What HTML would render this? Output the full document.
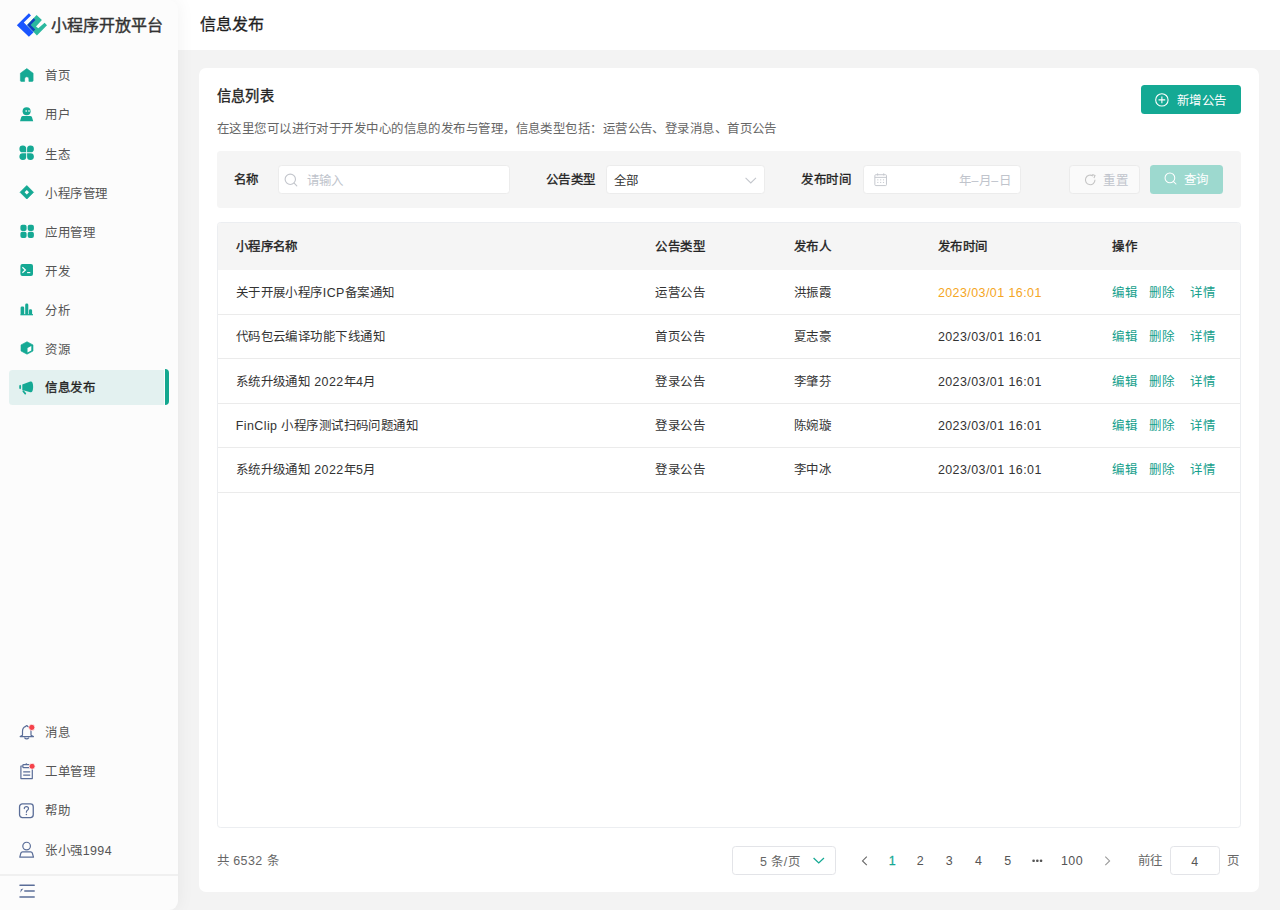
<!DOCTYPE html>
<html lang="zh-CN"><head><meta charset="utf-8">
<style>
html{zoom:0.888889;overflow:hidden;}
*{box-sizing:border-box;margin:0;padding:0;}
body{text-spacing-trim:space-all;width:1440px;height:1023.75px;overflow:hidden;position:relative;background:#f3f3f3;font-family:"Liberation Sans",sans-serif;font-size:14px;letter-spacing:0.5px;color:#333;}
.abs{position:absolute;}
/* sidebar */
#side{position:absolute;left:0;top:0;width:200px;height:1024px;background:#fcfcfc;border-radius:0 10px 10px 0;box-shadow:0 0 20px rgba(0,0,0,0.06);z-index:2;}
#logo{position:absolute;left:13.5px;top:9px;width:45px;height:38.25px;}
#logotxt{position:absolute;left:57px;top:16px;font-size:18px;letter-spacing:0;font-weight:normal;-webkit-text-stroke:0.45px #333;color:#333;line-height:26px;white-space:nowrap;}
.mi{position:absolute;left:10px;width:180px;height:40px;border-radius:4px;}
.mi .ic{position:absolute;left:11.375px;top:11px;width:18px;height:18px;overflow:visible;}
.mi .tx{position:absolute;left:41px;top:2.75px;line-height:40px;font-size:14px;color:#555;white-space:nowrap;}
.mi.act{background:linear-gradient(to right,#e3f1f0 0,#e3f1f0 174.5px,#fcfcfc 174.5px);}
.mi.act .tx{top:1.75px;color:#222;-webkit-text-stroke:0.35px #222;}
.mi.act:after{content:"";position:absolute;right:0;top:-0.5px;width:4.5px;height:40.5px;background:#13a78f;border-radius:0 4.5px 4.5px 0;}
#sep{position:absolute;left:0;top:983px;width:200px;height:2px;background:#f0f0f0;}
/* header */
#hdr{position:absolute;left:190px;top:0;width:1250px;height:56px;background:#fff;}
#hdrt{position:absolute;left:225px;top:15px;font-size:18px;letter-spacing:0;font-weight:normal;-webkit-text-stroke:0.3px #222;color:#222;line-height:28px;z-index:3;}
/* card */
#card{position:absolute;left:224px;top:76px;width:1192px;height:928px;background:#fff;border-radius:8px;}
#ttl{position:absolute;left:20px;top:21px;font-size:16px;letter-spacing:0.25px;font-weight:normal;-webkit-text-stroke:0.4px #222;color:#222;line-height:24px;}
#desc{position:absolute;left:20px;top:58px;font-size:14px;color:#666;line-height:24px;white-space:nowrap;}
#addbtn{position:absolute;left:1060px;top:20px;width:112px;height:32px;background:#14a994;border-radius:4px;color:#fff;font-size:14px;line-height:32px;}
#addbtn span{position:absolute;left:40px;top:2px;}
#filter{position:absolute;left:20px;top:94px;width:1152px;height:64px;background:#f5f5f5;border-radius:4px;}
.lbl{position:absolute;top:1px;margin-left:-1px;line-height:64px;font-size:14px;font-weight:normal;-webkit-text-stroke:0.35px #222;color:#222;white-space:nowrap;}
.inp{position:absolute;top:16px;height:32px;background:#fff;border:1px solid #ececec;border-radius:4px;}
.btn{position:absolute;top:16px;height:32px;border-radius:4px;font-size:14px;line-height:30px;}
.ph{position:absolute;top:2px;line-height:30px;font-size:14px;color:#c0c4cc;white-space:nowrap;}
/* table */
#tbl{position:absolute;left:20px;top:174px;width:1152px;height:681px;border:1px solid #eceef1;border-radius:4px;overflow:hidden;}
#thead{position:absolute;left:0;top:0;width:1150px;height:53px;background:#f5f5f5;}
.th{position:absolute;top:0.5px;line-height:53px;font-size:14px;font-weight:normal;-webkit-text-stroke:0.4px #222;color:#222;white-space:nowrap;}
.row{position:absolute;left:0;width:1150px;height:50px;border-bottom:1px solid #ebebeb;}
.td{position:absolute;top:1.5px;line-height:49px;font-size:14px;color:#333;white-space:nowrap;}
.lk{color:#14a08c;}
/* pagination */
#pg{position:absolute;left:0;top:876px;width:1192px;height:32px;}
.pi{position:absolute;top:1.25px;line-height:32px;font-size:14px;color:#555;text-align:center;}
.md{font-weight:normal !important;-webkit-text-stroke:0.35px currentColor;}
</style></head>
<body>
<div id="hdr"></div>
<div id="hdrt">信息发布</div>
<div id="side">
  <svg id="logo" viewBox="12 8 40 34"><path d="M16.85,25.2 L28.9,13.3 L31,15.4 L23.8,22.6 L33.6,32.3 L28.9,36.8 Z" fill="#1a55ff"/><path d="M36.6,15.1 L41.9,20.1 L36.0,26.6 L38.3,28.3 L44.6,22.7 L47,25.3 L36.9,35.4 L27.1,25.0 Z" fill="#2ab89f"/><path d="M27.1,25.0 L33.7,18.2 L35.4,19.9 L30.6,24.9 L35.2,29.6 L33.4,31.4 Z" fill="#0f3fbf"/></svg>
  <div id="logotxt">小程序开放平台</div>

  <div class="mi" style="top:64px"><svg class="ic" viewBox="0 0 16 16"><path d="M7.8,1.6 L14.1,6.2 V13.6 Q14.1,14.4 13.3,14.4 H9.9 V11.9 A2.15,2.15 0 0 0 5.6,11.9 V14.4 H2.2 Q1.4,14.4 1.4,13.6 V6.2 Z" fill="#15a994" stroke="#15a994" stroke-width="0.6" stroke-linejoin="round"/></svg><div class="tx">首页</div></div>
  <div class="mi" style="top:108px"><svg class="ic" viewBox="0 0 16 16"><circle cx="7.6" cy="5.2" r="4.0" fill="#15a994"/><ellipse cx="7.2" cy="5.0" rx="0.9" ry="0.7" fill="#fff"/><ellipse cx="10.0" cy="5.0" rx="0.9" ry="0.7" fill="#fff"/><path d="M1.0,15.2 L2.2,11.3 Q2.6,10.0 4.0,10.0 H11.2 Q12.6,10.0 13.0,11.3 L14.2,15.2 Z" fill="#15a994"/></svg><div class="tx">用户</div></div>
  <div class="mi" style="top:152px"><svg class="ic" viewBox="0 0 16 16"><path d="M7.2,7.3 H4.0 A3.4,3.4 0 1 1 7.2,4.1 Z" fill="#15a994"/><path d="M8.1,7.3 H11.3 A3.4,3.4 0 1 0 8.1,4.1 Z" fill="#15a994"/><path d="M7.2,8.2 H4.0 A3.4,3.4 0 1 0 7.2,11.4 Z" fill="#15a994"/><path d="M8.1,8.2 H11.3 A3.4,3.4 0 1 1 8.1,11.4 Z" fill="#15a994"/></svg><div class="tx">生态</div></div>
  <div class="mi" style="top:196px"><svg class="ic" viewBox="0 0 16 16"><path d="M7.8,1.6 L14.5,8.3 L7.8,15.0 L1.1,8.3 Z" fill="#15a994" stroke="#15a994" stroke-width="0.8" stroke-linejoin="round"/><path d="M7.8,6.1 L10.0,8.3 L7.8,10.5 L5.6,8.3 Z" fill="#fff"/></svg><div class="tx">小程序管理</div></div>
  <div class="mi" style="top:240px"><svg class="ic" viewBox="0 0 16 16"><rect x="1.4" y="1.7" width="6.2" height="6.2" rx="2" fill="#15a994"/><rect x="8.7" y="1.7" width="6.2" height="6.2" rx="2" fill="#15a994"/><rect x="1.4" y="8.7" width="6.2" height="6.2" rx="2" fill="#15a994"/><rect x="8.7" y="8.7" width="6.2" height="6.2" rx="2" fill="#15a994"/></svg><div class="tx">应用管理</div></div>
  <div class="mi" style="top:284px"><svg class="ic" viewBox="0 0 16 16"><rect x="1.4" y="1.9" width="12.6" height="12.1" rx="2" fill="#15a994"/><path d="M3.4,5.2 L6.4,8.0 L3.4,10.8" fill="none" stroke="#fff" stroke-width="1.2"/><path d="M8.1,10.6 H11.3" stroke="#fff" stroke-width="1.1"/></svg><div class="tx">开发</div></div>
  <div class="mi" style="top:328px"><svg class="ic" viewBox="0 0 16 16"><rect x="1.6" y="5.4" width="3.6" height="8.5" rx="1.4" fill="#15a994"/><rect x="6.2" y="2.6" width="3.1" height="11.3" rx="1.4" fill="#15a994"/><rect x="9.9" y="8.3" width="3.2" height="5.6" rx="1.4" fill="#15a994"/><rect x="1.4" y="13.1" width="12.6" height="1.2" fill="#15a994"/></svg><div class="tx">分析</div></div>
  <div class="mi" style="top:372px"><svg class="ic" viewBox="0 0 16 16"><path d="M8,1.7 L14,4.9 V11.0 L8,14.2 L2,11.0 V4.9 Z" fill="#15a994" stroke="#15a994" stroke-width="0.6" stroke-linejoin="round"/><path d="M8.5,7.9 L12.3,5.9 V10.6 L8.5,12.6 Z" fill="#fff"/></svg><div class="tx">资源</div></div>
  <div class="mi act" style="top:416px"><svg class="ic" viewBox="0 0 16 16"><ellipse cx="1.15" cy="7.05" rx="0.95" ry="2.2" fill="#15a994"/><path d="M3.3,4.5 L11.3,1.55 Q14.1,0.9 14.1,6.9 Q14.1,12.9 11.3,12.25 L3.3,10.05 Z" fill="#15a994"/><path d="M4.3,11.2 L6.3,13.6" stroke="#15a994" stroke-width="1.7" stroke-linecap="round"/></svg><div class="tx">信息发布</div></div>

  <div class="mi" style="top:803px"><svg class="ic" viewBox="0 0 16 16"><path d="M7.7,1.5 Q8.4,1.5 8.5,2.4 Q12,3.4 12,7.2 V11.2 L14.4,12.6 H1.2 L3.5,11.2 V7.2 Q3.5,3.4 6.9,2.4 Q7,1.5 7.7,1.5 Z" fill="none" stroke="#5a6d98" stroke-width="1.2" stroke-linejoin="round"/><path d="M5.4,13.6 Q7.7,16.2 10,13.6" fill="none" stroke="#5a6d98" stroke-width="1.2"/><circle cx="12.8" cy="3.4" r="3.1" fill="#f5424a" stroke="#fcfcfc" stroke-width="0.8"/></svg><div class="tx">消息</div></div>
  <div class="mi" style="top:847px"><svg class="ic" viewBox="0 0 16 16"><path d="M3.8,3.0 H1.9 V15.6 H13.3 V3.0 H11.4" fill="none" stroke="#5a6d98" stroke-width="1.2" stroke-linejoin="round"/><rect x="3.9" y="1.6" width="6.9" height="3.0" rx="0.6" fill="none" stroke="#5a6d98" stroke-width="1.2"/><circle cx="7.35" cy="1.2" r="0.9" fill="#5a6d98"/><path d="M4.2,8.8 H11.2 M4.2,12.1 H11.2" stroke="#5a6d98" stroke-width="1.2"/><circle cx="13.1" cy="3.3" r="3.0" fill="#f5424a" stroke="#fcfcfc" stroke-width="0.8"/></svg><div class="tx">工单管理</div></div>
  <div class="mi" style="top:891px"><svg class="ic" viewBox="0 0 16 16"><rect x="0.55" y="1.85" width="13.7" height="13.8" rx="2.8" fill="none" stroke="#5a6d98" stroke-width="1.3"/><path d="M5.3,6.6 Q5.3,4.6 7.4,4.6 Q9.5,4.6 9.5,6.5 Q9.5,7.6 8.4,8.3 Q7.4,8.9 7.4,10.2" fill="none" stroke="#5a6d98" stroke-width="1.2" stroke-linecap="round"/><circle cx="7.4" cy="12.6" r="0.75" fill="#5a6d98"/></svg><div class="tx">帮助</div></div>
  <div class="mi" style="top:935px"><svg class="ic" viewBox="0 0 16 16"><circle cx="7.6" cy="5.05" r="3.8" fill="none" stroke="#5a6d98" stroke-width="1.2"/><path d="M0.8,16.2 L1.9,12.0 Q2.3,10.8 3.6,10.8 H11.6 Q12.9,10.8 13.3,12.0 L14.5,16.2 Z" fill="none" stroke="#5a6d98" stroke-width="1.2" stroke-linejoin="round"/></svg><div class="tx">张小强1994</div></div>
  <div id="sep"></div>
  <svg class="abs" style="left:21.375px;top:994px;width:18px;height:18px" viewBox="0 0 16 16"><path d="M1,1.3 H15.2 M5.8,7.1 H15.2 M1,12.9 H15.2" stroke="#5a6d98" stroke-width="1.5" stroke-linecap="round"/><path d="M1.2,8.8 L1.9,5.2 L4.4,4.6 Z" fill="#5a6d98"/></svg>
</div>

<div id="card">
  <div id="ttl">信息列表</div>
  <div id="desc">在这里您可以进行对于开发中心的信息的发布与管理，信息类型包括：运营公告、登录消息、首页公告</div>
  <div id="addbtn"><svg style="position:absolute;left:15.5px;top:8.5px;width:15.5px;height:15.5px" viewBox="0 0 14 14"><circle cx="7" cy="7" r="6.3" fill="none" stroke="#fff" stroke-width="1.1"/><path d="M7,3.6 V10.4 M3.6,7 H10.4" stroke="#fff" stroke-width="1.1"/></svg><span>新增公告</span></div>
  <div id="filter">
    <div class="lbl" style="left:20px">名称</div>
    <div class="inp" style="left:68.75px;width:260.5px">
      <svg class="abs" style="left:6px;top:7px;width:16px;height:16px" viewBox="0 0 14 14"><circle cx="6.2" cy="6.2" r="5.1" fill="none" stroke="#c3c6cc" stroke-width="1.1"/><path d="M10,10 L12.6,12.6" stroke="#c3c6cc" stroke-width="1.1" stroke-linecap="round"/></svg>
      <div class="ph" style="left:31px">请输入</div>
    </div>
    <div class="lbl" style="left:370.9px">公告类型</div>
    <div class="inp" style="left:438.1px;width:178.1px">
      <div class="ph" style="left:7px;color:#333">全部</div>
      <svg class="abs" style="left:155px;top:12px;width:13px;height:8px" viewBox="0 0 12 7"><path d="M0.6,0.8 L6,6 L11.4,0.8" fill="none" stroke="#c3c6cc" stroke-width="1.1"/></svg>
    </div>
    <div class="lbl" style="left:658.4px">发布时间</div>
    <div class="inp" style="left:726.8px;width:177.8px">
      <svg class="abs" style="left:11px;top:8px;width:15px;height:15px" viewBox="0 0 14 14"><rect x="0.9" y="1.8" width="12.2" height="11.4" rx="1" fill="none" stroke="#c3c6cc" stroke-width="1"/><path d="M0.9,4.6 H13.1 M3.8,0.4 V2.6 M10.2,0.4 V2.6" stroke="#c3c6cc" stroke-width="1"/><path d="M3.4,7.2 H4.6 M6.4,7.2 H7.6 M9.4,7.2 H10.6 M3.4,9.9 H4.6 M6.4,9.9 H7.6 M9.4,9.9 H10.6" stroke="#c3c6cc" stroke-width="1"/></svg>
      <div class="ph" style="left:auto;right:10px">年–月–日</div>
    </div>
    <div class="btn" style="left:958.3px;width:80.4px;border:1px solid #ebebeb;background:#fafafa;color:#bbb">
      <svg class="abs" style="left:16px;top:8.5px;width:14px;height:14px" viewBox="0 0 12 12"><path d="M10.6,5.6 A4.6,4.6 0 1 1 8.6,1.9" fill="none" stroke="#c4c4c4" stroke-width="1.05"/><path d="M8.0,0.4 L10.6,1.4 L9.6,4.0" fill="none" stroke="#c4c4c4" stroke-width="1.05"/></svg>
      <div class="ph" style="left:38px">重置</div>
    </div>
    <div class="btn" style="left:1049.75px;width:81.9px;background:#9dd9cf;color:#fff">
      <svg class="abs" style="left:15.5px;top:8px;width:15px;height:15px" viewBox="0 0 14 14"><circle cx="6.2" cy="6.2" r="5.1" fill="none" stroke="#fff" stroke-width="1.1"/><path d="M10,10 L12.6,12.6" stroke="#fff" stroke-width="1.1" stroke-linecap="round"/></svg>
      <div class="ph" style="left:38px;color:#fff">查询</div>
    </div>
  </div>
  <div id="tbl">
    <div id="thead">
      <div class="th" style="left:20px">小程序名称</div>
      <div class="th" style="left:492px">公告类型</div>
      <div class="th" style="left:648px">发布人</div>
      <div class="th" style="left:810px">发布时间</div>
      <div class="th" style="left:1006px">操作</div>
    </div>
    <div class="row" style="top:53px">
      <div class="td" style="left:20px">关于开展小程序ICP备案通知</div>
      <div class="td" style="left:492px">运营公告</div>
      <div class="td" style="left:648px">洪振霞</div>
      <div class="td" style="left:810px;color:#f5a623">2023/03/01 16:01</div>
      <div class="td lk" style="left:1006px">编辑</div>
      <div class="td lk" style="left:1048px">删除</div>
      <div class="td lk" style="left:1094px">详情</div>
    </div>
    <div class="row" style="top:103px">
      <div class="td" style="left:20px">代码包云编译功能下线通知</div>
      <div class="td" style="left:492px">首页公告</div>
      <div class="td" style="left:648px">夏志豪</div>
      <div class="td" style="left:810px">2023/03/01 16:01</div>
      <div class="td lk" style="left:1006px">编辑</div>
      <div class="td lk" style="left:1048px">删除</div>
      <div class="td lk" style="left:1094px">详情</div>
    </div>
    <div class="row" style="top:153px">
      <div class="td" style="left:20px">系统升级通知 2022年4月</div>
      <div class="td" style="left:492px">登录公告</div>
      <div class="td" style="left:648px">李肇芬</div>
      <div class="td" style="left:810px">2023/03/01 16:01</div>
      <div class="td lk" style="left:1006px">编辑</div>
      <div class="td lk" style="left:1048px">删除</div>
      <div class="td lk" style="left:1094px">详情</div>
    </div>
    <div class="row" style="top:203px">
      <div class="td" style="left:20px">FinClip 小程序测试扫码问题通知</div>
      <div class="td" style="left:492px">登录公告</div>
      <div class="td" style="left:648px">陈婉璇</div>
      <div class="td" style="left:810px">2023/03/01 16:01</div>
      <div class="td lk" style="left:1006px">编辑</div>
      <div class="td lk" style="left:1048px">删除</div>
      <div class="td lk" style="left:1094px">详情</div>
    </div>
    <div class="row" style="top:253px">
      <div class="td" style="left:20px">系统升级通知 2022年5月</div>
      <div class="td" style="left:492px">登录公告</div>
      <div class="td" style="left:648px">李中冰</div>
      <div class="td" style="left:810px">2023/03/01 16:01</div>
      <div class="td lk" style="left:1006px">编辑</div>
      <div class="td lk" style="left:1048px">删除</div>
      <div class="td lk" style="left:1094px">详情</div>
    </div>
  </div>
  <div id="pg">
    <div class="pi" style="left:20px;text-align:left;color:#666">共 6532 条</div>
    <div class="inp" style="left:600px;top:0;width:116.5px;height:32px;border-color:#e3e4e8">
      <div class="ph" style="left:30px;color:#666">5 条/页</div>
      <svg class="abs" style="left:89.5px;top:11.5px;width:13px;height:8px" viewBox="0 0 12 7"><path d="M0.6,0.8 L6,6 L11.4,0.8" fill="none" stroke="#15a994" stroke-width="1.3"/></svg>
    </div>
    <svg class="abs" style="left:744.5px;top:11px;width:8px;height:11px" viewBox="0 0 7 10"><path d="M5.8,0.6 L1.4,5 L5.8,9.4" fill="none" stroke="#666" stroke-width="1.1"/></svg>
    <div class="pi" style="left:764px;width:32px;color:#15a994;-webkit-text-stroke:0.3px #15a994">1</div>
    <div class="pi" style="left:795.5px;width:32px">2</div>
    <div class="pi" style="left:828px;width:32px">3</div>
    <div class="pi" style="left:861px;width:32px">4</div>
    <div class="pi" style="left:894px;width:32px">5</div>
    <svg class="abs" style="left:937px;top:14px;width:12px;height:4px" viewBox="0 0 12 4"><circle cx="1.8" cy="2" r="1.5" fill="#555"/><circle cx="6" cy="2" r="1.5" fill="#555"/><circle cx="10.2" cy="2" r="1.5" fill="#555"/></svg>
    <div class="pi" style="left:962px;width:40px">100</div>
    <svg class="abs" style="left:1018px;top:11px;width:8px;height:11px" viewBox="0 0 7 10"><path d="M1.2,0.6 L5.6,5 L1.2,9.4" fill="none" stroke="#999" stroke-width="1.1"/></svg>
    <div class="pi" style="left:1056px;color:#666">前往</div>
    <div class="inp" style="left:1092.5px;top:0;width:55.5px;height:32px;border-color:#e3e4e8"><div class="ph" style="left:0;width:100%;text-align:center;color:#555">4</div></div>
    <div class="pi" style="left:1156px;color:#666">页</div>
  </div>
</div>
</body></html>
